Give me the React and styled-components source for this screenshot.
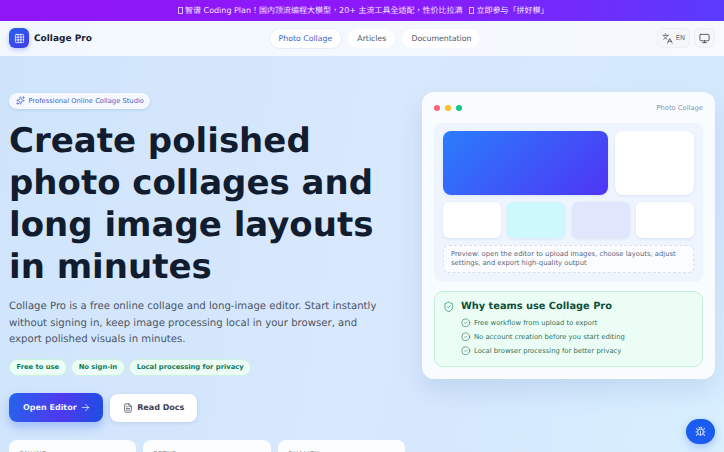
import React from "react";
import styled, { createGlobalStyle } from "styled-components";
import {
  ArrowRight,
  Bug,
  CircleCheck,
  FileText,
  Grid3x3,
  Languages,
  Monitor,
  ShieldCheck,
  Sparkles,
} from "lucide-react";

const GlobalStyle = createGlobalStyle`
  html, body {
    margin: 0;
    padding: 0;
    height: 452px;
    overflow: hidden;
  }
  body {
    font-family: "DejaVu Sans", "Noto Sans CJK TC", sans-serif;
    text-rendering: geometricPrecision;
  }
  * {
    box-sizing: border-box;
  }
`;

const Page = styled.div`
  width: 724px;
  height: 452px;
  overflow: hidden;
  position: relative;
  background:
    radial-gradient(circle at 100% 100%, #d9f0ff 0%, rgba(217, 240, 255, 0) 30%),
    linear-gradient(100deg, #cfe4fb 0%, #d8e8fd 50%, #d3e9fd 100%);
`;

const Banner = styled.div`
  height: 20.5px;
  padding-left: 2px;
  display: flex;
  align-items: center;
  justify-content: center;
  gap: 2.5px;
  color: #f3e3ff;
  font-size: 8px;
  white-space: nowrap;
  text-spacing-trim: space-all;
  background: linear-gradient(90deg, #8f17f5 0%, #8d18fb 55%, #5a3bfb 100%);
`;

const MissingGlyph = styled.span`
  width: 5px;
  height: 7.5px;
  margin-left: ${({ $spaced }) => ($spaced ? "4px" : "0")};
  border: 1px solid #d9b8ff;
`;

const Header = styled.header`
  height: 35.5px;
  padding: 0 9px;
  display: flex;
  justify-content: space-between;
  align-items: center;
  background: linear-gradient(90deg, #f3f8ff 0%, #f6faff 100%);
`;

const Brand = styled.div`
  width: 83px;
  display: flex;
  align-items: center;
  gap: 5px;
  font-size: 9px;
  font-weight: 700;
  color: #1d2433;
  white-space: nowrap;
`;

const BrandName = styled.span`
  margin-top: 2px;
`;

const LogoMark = styled.div`
  width: 20px;
  height: 20px;
  border-radius: 6px;
  display: flex;
  align-items: center;
  justify-content: center;
  color: #fff;
  background: linear-gradient(135deg, #2563f0 0%, #4338e8 100%);
  box-shadow: 0 2px 5px rgba(59, 80, 230, 0.3);
`;

const Nav = styled.nav`
  display: flex;
  gap: 5px;
`;

const NavLink = styled.a`
  height: 21px;
  padding: 0 9px;
  display: flex;
  align-items: center;
  font-size: 7.8px;
  border-radius: 11px;
  background: #fff;
  color: ${({ $active }) => ($active ? "#3d63c9" : "#4b5563")};
  border: 1px solid ${({ $active }) => ($active ? "#e3edfb" : "#f3f6fb")};
`;

const Tools = styled.div`
  width: 57px;
  display: flex;
  justify-content: flex-end;
  gap: 4px;
`;

const ToolButton = styled.button`
  height: 20px;
  min-width: 20.5px;
  padding: 0 4px;
  display: flex;
  align-items: center;
  justify-content: center;
  gap: 3px;
  font-family: inherit;
  font-size: 6.75px;
  color: #6b7280;
  background: #f4f6f9;
  border: 1px solid #eceff3;
  border-radius: 6px;
  flex: none;
  svg {
    color: #374151;
    flex: none;
  }
`;

const Hero = styled.main`
  padding: 36px 9px 0;
  display: grid;
  grid-template-columns: 396px 293px;
  justify-content: space-between;
  align-items: start;
`;

const Left = styled.section`
  padding-top: 1px;
  display: flex;
  flex-direction: column;
`;

const Badge = styled.div`
  align-self: flex-start;
  height: 15.5px;
  padding: 0 6.5px;
  display: flex;
  align-items: center;
  gap: 4px;
  border-radius: 8px;
  font-size: 6.75px;
  color: #4a62c4;
  background: #f5f9ff;
  box-shadow: 0 1px 3px rgba(80, 110, 180, 0.2);
`;

const Title = styled.h1`
  margin: 11px 0 0;
  font-size: 34px;
  line-height: 42.2px;
  font-weight: 700;
  color: #111c2e;
`;

const Lead = styled.p`
  margin: 11px 0 0;
  max-width: 376px;
  font-size: 10.15px;
  line-height: 16.5px;
  color: #4b5563;
`;

const Chips = styled.div`
  margin-top: 10px;
  display: flex;
  gap: 4.5px;
`;

const Chip = styled.span`
  height: 17px;
  padding: 0 6.5px;
  display: flex;
  align-items: center;
  border-radius: 9px;
  font-size: 6.75px;
  font-weight: 700;
  color: #0f7a5a;
  background: #ecfdf5;
  border: 1px solid #c9f2df;
`;

const Actions = styled.div`
  margin-top: 17.5px;
  display: flex;
  gap: 6.5px;
  align-items: center;
`;

const PrimaryButton = styled.a`
  height: 29px;
  padding: 0 12.5px 0 14px;
  display: flex;
  align-items: center;
  gap: 3px;
  border-radius: 8px;
  color: #eef2ff;
  font-size: 8px;
  font-weight: 700;
  background: linear-gradient(100deg, #2563eb 0%, #4f39f0 55%, #1d4fe0 100%);
  box-shadow: 0 5px 10px rgba(50, 100, 235, 0.3);
`;

const SecondaryButton = styled.a`
  height: 28px;
  padding: 0 13px;
  display: flex;
  align-items: center;
  gap: 4.5px;
  border-radius: 8px;
  color: #374151;
  font-size: 8px;
  font-weight: 700;
  background: #fff;
  box-shadow: 0 1px 4px rgba(80, 110, 180, 0.2);
`;

const Stats = styled.div`
  margin-top: 18px;
  display: grid;
  grid-template-columns: repeat(3, 1fr);
  gap: 7px;
`;

const Stat = styled.div`
  height: 60px;
  padding: 10px 10px;
  border-radius: 8px;
  background: #fbfdff;
  font-size: 6.5px;
  letter-spacing: 0.5px;
  color: #6b7280;
`;

const Panel = styled.section`
  height: 287px;
  padding: 12px;
  border-radius: 12px;
  background: #f9fcff;
  box-shadow: 0 12px 24px rgba(80, 120, 180, 0.16);
`;

const PanelTop = styled.div`
  display: flex;
  align-items: center;
  justify-content: space-between;
  height: 8px;
`;

const Dots = styled.div`
  display: flex;
  gap: 5px;
`;

const Dot = styled.i`
  width: 6px;
  height: 6px;
  border-radius: 50%;
  background: ${({ $color }) => $color};
`;

const PanelLabel = styled.span`
  font-size: 6.75px;
  color: #8a94a6;
`;

const Canvas = styled.div`
  margin-top: 11px;
  height: 159px;
  padding: 8px 9px 8px 9px;
  border-radius: 8px;
  background: #eff5fe;
  display: flex;
  flex-direction: column;
  gap: 7px;
`;

const TopTiles = styled.div`
  display: grid;
  grid-template-columns: 165px 79px;
  justify-content: space-between;
`;

const RowTiles = styled.div`
  display: grid;
  grid-template-columns: repeat(4, 58px);
  justify-content: space-between;
`;

const Tile = styled.div`
  height: ${({ $tall }) => ($tall ? "64px" : "36px")};
  border-radius: ${({ $tall }) => ($tall ? "8px" : "6px")};
  background: ${({ $fill }) => $fill || "#fff"};
  box-shadow: 0 1px 3px rgba(80, 110, 180, 0.14);
`;

const Note = styled.div`
  height: 28px;
  padding: 0 7px;
  display: flex;
  align-items: center;
  border-radius: 6px;
  font-size: 6.8px;
  line-height: 9.5px;
  color: #5b6678;
  background: #fafcff;
  border: 1px dashed #d6e2f3;
`;

const WhyCard = styled.div`
  margin-top: 9px;
  height: 76px;
  padding: 8.5px 8px;
  display: flex;
  gap: 6.5px;
  border-radius: 9px;
  background: #ecfdf5;
  border: 1px solid #c3efdb;
  > svg {
    color: #10946b;
    flex: none;
  }
`;

const WhyBody = styled.div`
  display: flex;
  flex-direction: column;
`;

const WhyTitle = styled.h3`
  margin: 0 0 4px;
  font-size: 9.8px;
  line-height: 11px;
  font-weight: 700;
  color: #0d4f3c;
`;

const WhyItem = styled.div`
  height: 14.7px;
  display: flex;
  align-items: center;
  gap: 3.5px;
  font-size: 6.8px;
  color: #2f7460;
  svg {
    color: #2f7a62;
    flex: none;
  }
`;

const BugButton = styled.button`
  position: absolute;
  right: 9px;
  bottom: 8px;
  width: 29px;
  height: 25px;
  display: flex;
  align-items: center;
  justify-content: center;
  border: none;
  border-radius: 13px;
  color: #fff;
  background: #1a5cf0;
  box-shadow: 0 3px 8px rgba(40, 90, 230, 0.3);
`;

const whyItems = [
  "Free workflow from upload to export",
  "No account creation before you start editing",
  "Local browser processing for better privacy",
];

const App = () => {
  return (
    <Page>
      <GlobalStyle />
      <Banner>
        <MissingGlyph />
        <span>智谱 Coding Plan！国内顶流编程大模型，20+ 主流工具全适配，性价比拉满</span>
        <MissingGlyph $spaced />
        <span>立即参与「拼好模」</span>
      </Banner>
      <Header>
        <Brand>
          <LogoMark>
            <Grid3x3 size={11} strokeWidth={1.6} />
          </LogoMark>
          <BrandName>Collage Pro</BrandName>
        </Brand>
        <Nav>
          <NavLink $active>Photo Collage</NavLink>
          <NavLink>Articles</NavLink>
          <NavLink>Documentation</NavLink>
        </Nav>
        <Tools>
          <ToolButton>
            <Languages size={11} strokeWidth={1.6} />
            EN
          </ToolButton>
          <ToolButton>
            <Monitor size={11} strokeWidth={1.8} />
          </ToolButton>
        </Tools>
      </Header>
      <Hero>
        <Left>
          <Badge>
            <Sparkles size={9} strokeWidth={1.8} />
            Professional Online Collage Studio
          </Badge>
          <Title>
            Create polished photo collages and long image layouts in minutes
          </Title>
          <Lead>
            Collage Pro is a free online collage and long-image editor. Start instantly without signing in, keep image processing local in your browser, and export polished visuals in minutes.
          </Lead>
          <Chips>
            <Chip>Free to use</Chip>
            <Chip>No sign-in</Chip>
            <Chip>Local processing for privacy</Chip>
          </Chips>
          <Actions>
            <PrimaryButton>
              Open Editor
              <ArrowRight size={11} strokeWidth={1.6} />
            </PrimaryButton>
            <SecondaryButton>
              <FileText size={10} strokeWidth={1.7} />
              Read Docs
            </SecondaryButton>
          </Actions>
          <Stats>
            <Stat>ONLINE</Stat>
            <Stat>SETUP</Stat>
            <Stat>QUALITY</Stat>
          </Stats>
        </Left>
        <Panel>
          <PanelTop>
            <Dots>
              <Dot $color="#f7647a" />
              <Dot $color="#fbbf24" />
              <Dot $color="#10c98a" />
            </Dots>
            <PanelLabel>Photo Collage</PanelLabel>
          </PanelTop>
          <Canvas>
            <TopTiles>
              <Tile $tall $fill="linear-gradient(135deg, #2a7dfb 0%, #4f35f5 100%)" />
              <Tile $tall />
            </TopTiles>
            <RowTiles>
              <Tile />
              <Tile $fill="#cdf9fc" />
              <Tile $fill="#e0e7fd" />
              <Tile />
            </RowTiles>
            <Note>Preview: open the editor to upload images, choose layouts, adjust settings, and export high-quality output</Note>
          </Canvas>
          <WhyCard>
            <ShieldCheck size={11.5} strokeWidth={1.5} />
            <WhyBody>
              <WhyTitle>Why teams use Collage Pro</WhyTitle>
              {whyItems.map((item) => (
                <WhyItem key={item}>
                  <CircleCheck size={9.5} strokeWidth={1.6} />
                  {item}
                </WhyItem>
              ))}
            </WhyBody>
          </WhyCard>
        </Panel>
      </Hero>
      <BugButton>
        <Bug size={11} strokeWidth={1.6} />
      </BugButton>
    </Page>
  );
};

export default App;
